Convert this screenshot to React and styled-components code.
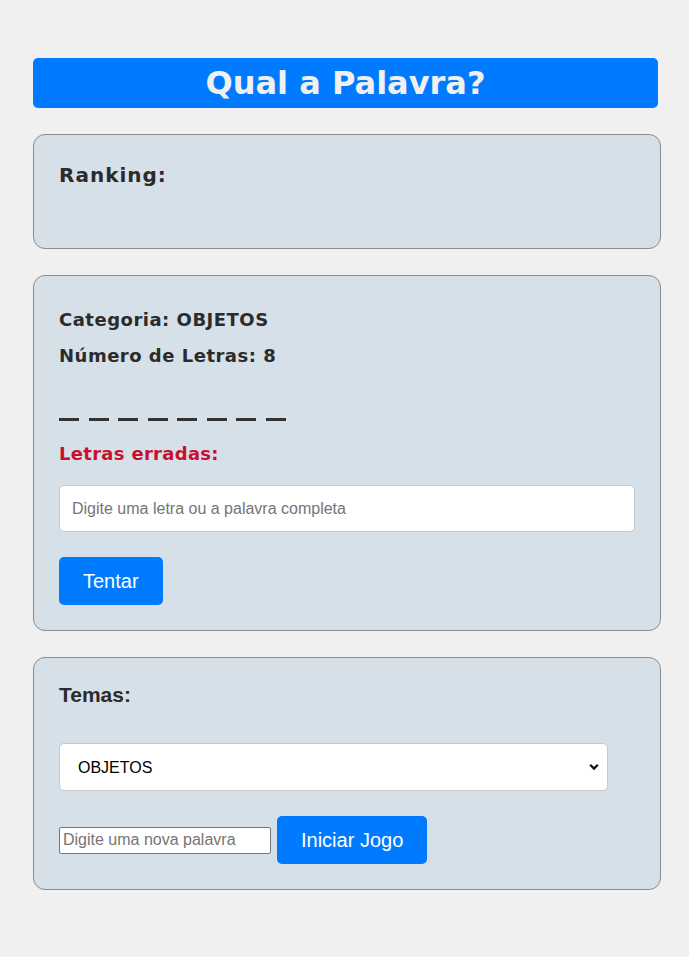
import React from 'react'
import styled, { createGlobalStyle } from 'styled-components'

const GlobalStyle = createGlobalStyle`
  * { box-sizing: border-box; }
  body {
    margin: 0;
    background: #f0f0f0;
    font-family: 'Liberation Sans', Arial, sans-serif;
    color: #333;
  }
`

const Page = styled.div`
  display: flex;
  flex-direction: column;
  gap: 26px;
  width: 628px;
  padding: 58px 0 68px 0;
  margin-left: 33px;
`

const Title = styled.h1`
  margin: 0;
  width: 625px;
  height: 50px;
  border-radius: 5px;
  background: #007bff;
  color: #f0f0f0;
  font-family: 'DejaVu Sans', Verdana, sans-serif;
  font-weight: bold;
  font-size: 32px;
  line-height: 50px;
  text-align: center;
`

const Card = styled.section`
  display: flex;
  flex-direction: column;
  align-items: flex-start;
  background: #d6e0e8;
  border: 1px solid #8c8c8c;
  border-radius: 12px;
  padding: 25px;
`

const RankingTitle = styled.h2`
  margin: 3px 0 0 0;
  font-family: 'DejaVu Sans', Verdana, sans-serif;
  font-size: 20px;
  letter-spacing: 1px;
  line-height: 24px;
  color: #2b2b2b;
`

const RankingList = styled.ol`
  margin: 0;
  padding: 0;
  min-height: 36px;
`

const Info = styled.p`
  margin: ${p => p.$top}px 0 0 0;
  font-family: 'DejaVu Sans', Verdana, sans-serif;
  font-weight: bold;
  font-size: 18px;
  letter-spacing: ${p => p.$spacing || 0.5}px;
  line-height: 21px;
  color: ${p => p.$color || '#2b2b2b'};
`

const Dashes = styled.div`
  display: flex;
  gap: 9.5px;
  margin-top: 52px;
`

const Dash = styled.span`
  display: block;
  width: 20px;
  height: 3px;
  background: #333;
`

const GuessInput = styled.input`
  margin-top: 21px;
  width: 576px;
  height: 47px;
  padding: 0 12px;
  border: 1px solid #c8c8c8;
  border-radius: 5px;
  background: #fff;
  font-family: 'Liberation Sans', Arial, sans-serif;
  font-size: 16px;
  color: #333;
  &::placeholder { color: #757575; }
`

const Button = styled.button`
  margin-top: ${p => p.$top || 0}px;
  height: 48px;
  padding: 0 24px;
  border: none;
  border-radius: 5px;
  background: #007bff;
  color: #fff;
  font-family: 'Liberation Sans', Arial, sans-serif;
  font-size: 20px;
  cursor: pointer;
`

const ThemeTitle = styled.h3`
  margin: 0;
  font-family: 'Liberation Sans', Arial, sans-serif;
  font-size: 21px;
  line-height: 24px;
  color: #2b2b2b;
`

const SelectWrap = styled.div`
  position: relative;
  margin-top: 36px;
  width: 549px;
`

const Select = styled.select`
  appearance: none;
  width: 100%;
  height: 48px;
  padding: 0 18px;
  border: 1px solid #c8c8c8;
  border-radius: 5px;
  background: #fff;
  font-family: 'Liberation Sans', Arial, sans-serif;
  font-size: 16px;
  color: #000;
`

const Chevron = styled.svg`
  position: absolute;
  right: 9px;
  top: 20px;
  pointer-events: none;
`

const Row = styled.div`
  display: flex;
  align-items: center;
  gap: 6px;
  margin-top: 25px;
`

const WordInput = styled.input`
  width: 212px;
  height: 27px;
  padding: 1px 3px;
  border: 1px solid #767676;
  border-radius: 2px;
  background: #fff;
  font-family: 'Liberation Sans', Arial, sans-serif;
  font-size: 16px;
  &::placeholder { color: #757575; }
`

const App = () => {
  const letters = 8
  return (
    <>
      <GlobalStyle />
      <Page>
        <Title>Qual a Palavra?</Title>

        <Card>
          <RankingTitle>Ranking:</RankingTitle>
          <RankingList />
        </Card>

        <Card>
          <Info $top={8}>Categoria: OBJETOS</Info>
          <Info $top={15}>Número de Letras: {letters}</Info>
          <Dashes aria-label="_ _ _ _ _ _ _ _">
            {Array.from({ length: letters }).map((_, i) => <Dash key={'dash_' + i} />)}
          </Dashes>
          <Info $top={22} $color="#c8102e" $spacing={0.3}>Letras erradas:</Info>
          <GuessInput placeholder="Digite uma letra ou a palavra completa" />
          <Button $top={25}>Tentar</Button>
        </Card>

        <Card>
          <ThemeTitle>Temas:</ThemeTitle>
          <SelectWrap>
            <Select defaultValue="OBJETOS">
              <option>OBJETOS</option>
              <option>ANIMAIS</option>
              <option>FRUTAS</option>
            </Select>
            <Chevron width="10" height="8" viewBox="0 0 10 8">
              <path d="M1.2 1.8 L5 5.6 L8.8 1.8" fill="none" stroke="#111" strokeWidth="2.2" />
            </Chevron>
          </SelectWrap>
          <Row>
            <WordInput placeholder="Digite uma nova palavra" />
            <Button>Iniciar Jogo</Button>
          </Row>
        </Card>
      </Page>
    </>
  )
}

export default App
